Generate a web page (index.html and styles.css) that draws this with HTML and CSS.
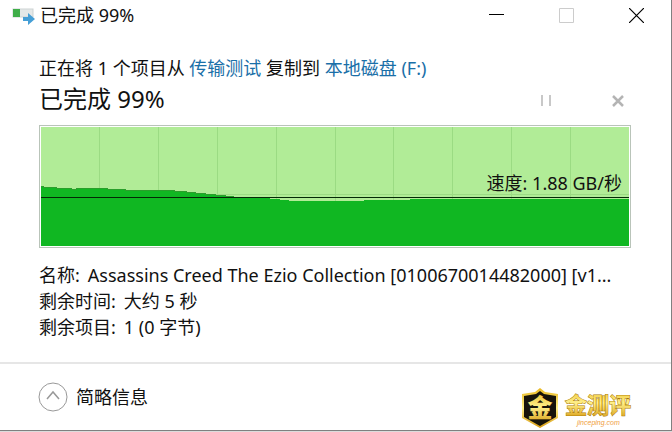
FILE: index.html
```html
<!DOCTYPE html>
<html lang="zh-CN">
  <head>
    <meta charset="UTF-8" />
    <meta name="viewport" content="width=device-width, initial-scale=1" />
    <title>已完成 99%</title>
    <link rel="stylesheet" href="styles.css">
  </head>
  <body>
    <div class="window">
      <header class="titlebar">
        <svg class="app-icon" width="24" height="20" viewBox="0 0 24 20">
          <rect x="1" y="4" width="20" height="8" fill="#e4e8e8" stroke="#cdd3d3" />
          <rect x="1" y="4" width="7" height="8" fill="#3fae49" />
          <path d="M11 12h5V8l7 6-7 6v-4h-5z" fill="#469fd6" />
        </svg>
        <span class="title">已完成 99%</span>
        <div class="window-buttons">
          <button aria-label="最小化">
            <svg width="15" height="15" viewBox="0 0 15 15"><path d="M0 6.500h15" stroke="#000" /></svg>
          </button>
          <button aria-label="最大化" disabled>
            <svg width="15" height="15" viewBox="0 0 15 15"><path d="M.5.5h14v14H.5z" fill="none" stroke="#ccc" /></svg>
          </button>
          <button aria-label="关闭">
            <svg width="15" height="15" viewBox="0 0 15 15"><path d="M0 0l15 15M15 0L0 15" stroke="#000" stroke-width="1.200" /></svg>
          </button>
        </div>
      </header>

      <main class="content">
        <p class="summary">正在将 1 个项目从 <a href="#">传输测试</a> 复制到 <a href="#">本地磁盘 (F:)</a></p>
        <div class="progress-row">
          <h1>已完成 99%</h1>
          <div class="actions">
            <button aria-label="暂停">
              <svg width="12" height="12" viewBox="0 0 12 12"><path d="M2 0v11M10 0v11" stroke="#c8c8c8" stroke-width="2" /></svg>
            </button>
            <button aria-label="取消">
              <svg width="12" height="12" viewBox="0 0 12 12"><path d="M1 1l10 10M11 1L1 11" stroke="#b4b4b4" stroke-width="2.500" /></svg>
            </button>
          </div>
        </div>

        <div class="chart">
          <svg class="graph" viewBox="0 0 588 119" preserveAspectRatio="none" shape-rendering="crispEdges">
            <rect width="588" height="119" fill="#b1ec97" />
            <path d="M58.500 0v119M117.500 0v119M176.500 0v119M235.500 0v119M294.500 0v119M352.500 0v119M411.500 0v119M470.500 0v119M529.500 0v119M0 67.500h588" stroke="#9bdb83" />
            <path d="M0 59h2v1h13v1h15v1h5v-1h31v1h18v1h49v1h12v1h9v1h10v1h10v1h10v1h9v1h16v1h20v1h10v1h9v1h75v-1h46v-1h219v47H0z" fill="#10b722" />
            <path d="M0 59.500h2v1h13v1h15v1h5v-1h31v1h18v1h49v1h12v1h9v1h10v1h10v1h10v1h9" fill="none" stroke="#2a9f2b" />
            <path d="M0 70.500h588" stroke="#042906" />
          </svg>
          <span class="speed">速度: 1.88 GB/秒</span>
        </div>

        <dl class="details">
          <div><dt>名称:</dt><dd>Assassins Creed The Ezio Collection [0100670014482000] [v1...</dd></div>
          <div><dt>剩余时间:</dt><dd>大约 5 秒</dd></div>
          <div><dt>剩余项目:</dt><dd>1 (0 字节)</dd></div>
        </dl>
      </main>

      <footer class="footer">
        <button class="toggle">
          <svg width="30" height="30" viewBox="0 0 30 30" fill="none">
            <circle cx="15" cy="15" r="14" stroke="#999" />
            <path d="M9 17l6-7 6 7" stroke="#999" stroke-width="1.500" />
          </svg>
          简略信息
        </button>
        <svg class="logo" width="116" height="43" viewBox="0 0 116 43">
          <defs>
            <linearGradient id="gold" x1="0" y1="0" x2="0" y2="1">
              <stop offset="0" stop-color="#e9b820" />
              <stop offset=".5" stop-color="#fff08a" />
              <stop offset="1" stop-color="#d79a10" />
            </linearGradient>
          </defs>
          <path d="M20 1l5 4 13 2v24L20 41 2 31V7l13-2z" fill="url(#gold)" />
          <path d="M20 4l4 3 12 2v21L20 39 4 30V9l12-2z" fill="#17130a" />
          <text class="logo-mark" x="20" y="30" text-anchor="middle" fill="url(#gold)">金</text>
          <text class="logo-name" x="45" y="26" fill="url(#gold)">金测评</text>
          <text class="logo-site" x="57" y="38">jinceping.com</text>
        </svg>
      </footer>
    </div>
  </body>
</html>
```
FILE: styles.css
```css
/* Base styles */
body {
  margin: 0;
  background: #dcdcdc;
  color: #111111;
  font-family: "Noto Sans", "Noto Sans CJK SC", sans-serif;
  font-size: 18px;
  line-height: 26px;
}

button {
  display: flex;
  align-items: center;
  padding: 0;
  border: none;
  background: none;
  color: inherit;
  font: inherit;
}

a {
  color: #1a6fa8;
  text-decoration: none;
}

.window {
  display: flex;
  flex-direction: column;
  box-sizing: border-box;
  height: calc(100vh - 1px);
  border-right: 1px solid #808080;
  border-bottom: 1px solid #808080;
  background: #ffffff;
}

/* Title bar */
.titlebar {
  display: flex;
  align-items: center;
  height: 30px;
  padding: 0 27px 0 12px;
}

.title {
  margin-left: 4px;
}

.window-buttons {
  display: flex;
  gap: 55px;
  margin-left: auto;
}

/* Copy progress */
.content {
  flex: 1;
  padding: 25px 40px 0 39px;
}

.summary {
  margin: 0;
}

.progress-row {
  display: flex;
  justify-content: space-between;
  align-items: center;
  height: 36px;
}

h1 {
  margin: 0;
  font-size: 24px;
  font-weight: 400;
}

.actions {
  display: flex;
  gap: 60px;
  padding: 4px 7px 0 0;
}

/* Speed chart */
.chart {
  position: relative;
  margin-top: 8px;
  padding: 1px;
  border: 1px solid #b9c4b9;
}

.graph {
  display: block;
  width: 100%;
  height: 119px;
}

.speed {
  position: absolute;
  right: 8px;
  top: 44px;
}

/* Details */
.details {
  margin: 14px 0 0;
}

.details div {
  display: flex;
  gap: 8px;
}

.details dd {
  margin: 0;
  white-space: nowrap;
}

/* Footer */
.footer {
  display: flex;
  justify-content: space-between;
  align-items: center;
  height: 66px;
  padding: 0 35px 0 38px;
  border-top: 2px solid #e6e6e6;
}

.toggle {
  gap: 8px;
}

.logo {
  align-self: flex-end;
}

.logo-mark {
  font-size: 25px;
  font-weight: 900;
}

.logo-name {
  font-family: "Noto Sans CJK SC", sans-serif;
  font-size: 22px;
  font-weight: 700;
  stroke: #a87908;
  stroke-width: 1px;
  paint-order: stroke;
}

.logo-site {
  fill: #f0a040;
  font-family: "Liberation Sans", sans-serif;
  font-size: 7px;
  font-style: italic;
}
```
